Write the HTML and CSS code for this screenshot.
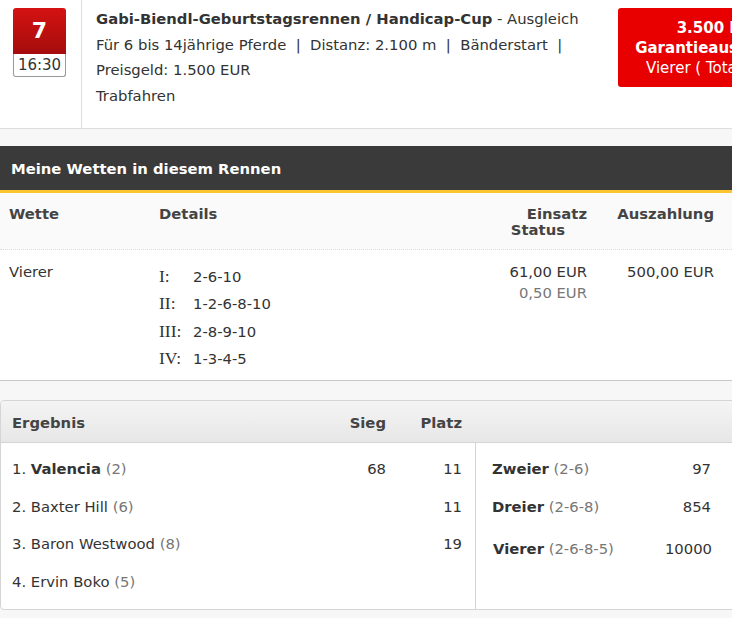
FILE: index.html
```html
<!DOCTYPE html>
<html lang="de">
    <head>
        <meta charset="utf-8">
        <title>Rennen 7 - Meine Wetten</title>
        <link rel="stylesheet" href="styles.css">
    </head>
    <body>
        <div class="page">
            <!-- Rennkopf -->
            <div class="race">
                <div class="race-no">
                    <div class="no">7</div>
                    <div class="time">16:30</div>
                </div>
                <div class="race-info">
                    <div><b>Gabi-Biendl-Geburtstagsrennen / Handicap-Cup</b> - Ausgleich</div>
                    <div>Für 6 bis 14jährige Pferde &nbsp;|&nbsp; Distanz: 2.100 m &nbsp;|&nbsp; Bänderstart &nbsp;|</div>
                    <div>Preisgeld: 1.500 EUR</div>
                    <div>Trabfahren</div>
                </div>
                <div class="prize">
                    <b>3.500 EUR</b>
                    <b>Garantieauszahlung</b>
                    <span>Vierer ( Totalisator )</span>
                </div>
            </div>

            <!-- Meine Wetten -->
            <div class="bets">
                <h2 class="bets-title">Meine Wetten in diesem Rennen</h2>
                <div class="bets-row bets-head">
                    <div>Wette</div>
                    <div>Details</div>
                    <div class="r">Einsatz<br><span class="status">Status</span></div>
                    <div class="r">Auszahlung</div>
                </div>
                <div class="bets-row bets-body">
                    <div>Vierer</div>
                    <div class="legs">
                        <span class="leg">I:</span><span>2-6-10</span>
                        <span class="leg">II:</span><span>1-2-6-8-10</span>
                        <span class="leg">III:</span><span>2-8-9-10</span>
                        <span class="leg">IV:</span><span>1-3-4-5</span>
                    </div>
                    <div class="r amount">61,00 EUR<br><span class="grey">0,50 EUR</span></div>
                    <div class="r amount">500,00 EUR</div>
                </div>
            </div>

            <!-- Ergebnis -->
            <div class="result">
                <div class="result-head">
                    <div class="res-cols">
                        <div>Ergebnis</div>
                        <div class="r">Sieg</div>
                        <div class="r">Platz</div>
                    </div>
                </div>
                <div class="result-body">
                    <div class="res-left">
                        <div class="res-cols">
                            <div>1. <b>Valencia</b> <span class="grey">(2)</span></div>
                            <div class="r">68</div>
                            <div class="r">11</div>
                        </div>
                        <div class="res-cols">
                            <div>2. Baxter Hill <span class="grey">(6)</span></div>
                            <div class="r"></div>
                            <div class="r">11</div>
                        </div>
                        <div class="res-cols">
                            <div>3. Baron Westwood <span class="grey">(8)</span></div>
                            <div class="r"></div>
                            <div class="r">19</div>
                        </div>
                        <div class="res-cols">
                            <div>4. Ervin Boko <span class="grey">(5)</span></div>
                            <div class="r"></div>
                            <div class="r"></div>
                        </div>
                    </div>
                    <div class="res-right">
                        <div class="quote"><div><b>Zweier</b> <span class="grey">(2-6)</span></div><div>97</div></div>
                        <div class="quote"><div><b>Dreier</b> <span class="grey">(2-6-8)</span></div><div>854</div></div>
                        <div class="quote q4"><div><b>Vierer</b> <span class="grey">(2-6-8-5)</span></div><div>10000</div></div>
                    </div>
                </div>
            </div>
        </div>
    </body>
</html>
```

FILE: styles.css
```css
/* Grundlayout */
html, body{
    margin: 0;
    overflow: hidden;
}
body{
    background: #f7f7f7;
    font-family: "DejaVu Sans", Verdana, sans-serif;
    font-size: 14.8px;
    color: #333;
}
.page{
    width: 822px;
}
.r{ text-align: right; }
.grey{ color: #777; }

/* Rennkopf */
.race{
    display: flex;
    background: #fff;
    border-bottom: 1px solid #ddd;
    height: 128px;
}
.race-no{
    flex: none;
    width: 82px;
    border-right: 1px solid #ddd;
    padding: 8px 0 0 13px;
    box-sizing: border-box;
}
.race-no .no{
    width: 53px;
    height: 46px;
    box-sizing: border-box;
    background: linear-gradient(#d41212, #a50c0c);
    border-radius: 3px 3px 0 0;
    color: #fff;
    font-weight: bold;
    font-size: 22px;
    text-align: center;
    line-height: 46px;
}
.race-no .time{
    width: 53px;
    height: 23px;
    box-sizing: border-box;
    border: 1px solid #999;
    border-top: 0;
    border-radius: 0 0 3px 3px;
    background: #fff;
    text-align: center;
    line-height: 22px;
    font-size: 15px;
}
.race-info{
    flex: none;
    width: 536px;
    box-sizing: border-box;
    padding: 6px 0 0 14px;
    line-height: 25.5px;
    white-space: nowrap;
}
.prize{
    flex: none;
    width: 204px;
    height: 79px;
    margin-top: 8px;
    background: #e80000;
    border-radius: 3px;
    color: #fff;
    display: flex;
    flex-direction: column;
    align-items: center;
    justify-content: center;
    line-height: 20px;
    font-size: 15px;
}

/* Meine Wetten */
.bets{
    margin-top: 17px;
    background: #fff;
    border-bottom: 1px solid #c8c8c8;
}
.bets-title{
    margin: 0;
    background: #3a3a3a;
    border-bottom: 3px solid #fcc52d;
    color: #fff;
    font-size: 14.8px;
    height: 44px;
    line-height: 46px;
    padding-left: 11px;
}
.bets-row{
    display: grid;
    grid-template-columns: 150px 300px 128px 127px;
    padding-left: 9px;
}
.bets-head{
    background: #fafafa;
    border-bottom: 1px dotted #ddd;
    height: 57px;
    box-sizing: border-box;
    padding-top: 13px;
    font-weight: bold;
    color: #444;
    line-height: 16px;
}
.bets-head .status{ padding-right: 22px; }
.bets-body{
    height: 130px;
    padding-top: 11px;
    box-sizing: border-box;
}
.bets-body > div:first-child{ margin-top: 2px; }
.legs{
    display: grid;
    grid-template-columns: 34px auto;
    align-content: start;
    font-size: 14.8px;
    line-height: 27.3px;
    margin-top: 2px;
}
.leg{
    font-family: "Liberation Serif", "Times New Roman", serif;
    font-size: 17.5px;
}
.amount{ line-height: 21px; }

/* Ergebnis */
.result{
    margin-top: 19px;
    background: #fff;
    border: 1px solid #d5d5d5;
    border-radius: 4px;
    height: 210px;
    box-sizing: border-box;
}
.result-head{
    height: 41px;
    background: linear-gradient(#f4f4f4, #e7e7e7);
    border-bottom: 1px solid #d5d5d5;
    border-radius: 4px 4px 0 0;
    font-weight: bold;
    color: #444;
    line-height: 43px;
}
.res-cols{
    display: grid;
    grid-template-columns: 306px 68px 76px;
    padding-left: 11px;
    width: 461px;
}
.result-body{
    display: flex;
    height: 167px;
}
.res-left{
    width: 474px;
    border-right: 1px solid #d5d5d5;
    padding-top: 7px;
    line-height: 38px;
}
.res-left .res-cols{ height: 37.7px; }
.res-right{
    padding: 7px 0 0 16px;
    line-height: 38px;
}
.quote{
    display: flex;
    justify-content: space-between;
    width: 219px;
}
.q4{
    margin-top: 4px;
    padding-left: 1px;
}
```
